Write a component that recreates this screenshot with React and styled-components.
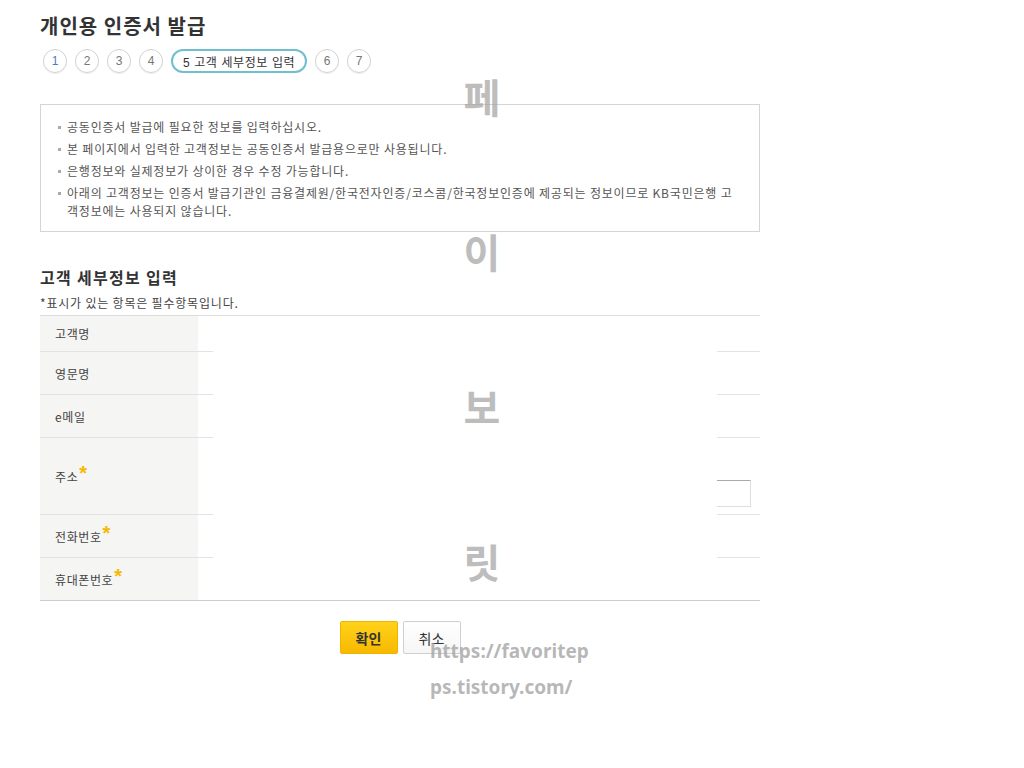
import React from "react";
import styled, { createGlobalStyle } from "styled-components";

const GlobalStyle = createGlobalStyle`
  html, body {
    margin: 0;
    padding: 0;
    background: #fff;
  }
  body {
    font-family: "Noto Sans CJK KR", "Noto Sans", sans-serif;
    color: #444;
  }
`;

const Page = styled.div`
  position: relative;
  width: 1024px;
  height: 768px;
  overflow: hidden;
`;

const Content = styled.div`
  width: 720px;
  padding: 10px 0 0 40px;
`;

const Title = styled.h2`
  margin: 0;
  font-size: 20px;
  line-height: 32px;
  font-weight: 700;
  letter-spacing: 1px;
  color: #333;
`;

const Steps = styled.ol`
  display: flex;
  gap: 8px;
  margin: 7px 0 0 3px;
  padding: 0;
  list-style: none;
`;

const Step = styled.li`
  box-sizing: border-box;
  height: 24px;
  min-width: 24px;
  padding: ${(p) => (p.$active ? "0 10px" : "0")};
  border-radius: 12px;
  border: ${(p) => (p.$active ? "2px solid #6fbfcf" : "1px solid #d2d2d2")};
  box-shadow: ${(p) => (p.$active ? "none" : "0 1px 1px rgba(0,0,0,0.08)")};
  display: flex;
  align-items: center;
  justify-content: center;
  font-family: "Liberation Sans", "Noto Sans CJK KR", sans-serif;
  font-size: 12px;
  color: ${(p) => (p.$active ? "#333" : p.$first ? "#4b7cc4" : "#777")};
  white-space: nowrap;
  letter-spacing: ${(p) => (p.$active ? "0.6px" : "0")};
`;

const InfoBox = styled.ul`
  box-sizing: border-box;
  width: 720px;
  margin: 31px 0 0;
  padding: 13px 22px 11px 17px;
  list-style: none;
  border: 1px solid #d4d4d4;
`;

const InfoItem = styled.li`
  position: relative;
  padding-left: 9px;
  font-size: 12px;
  line-height: 18px;
  letter-spacing: 0.8px;
  color: #555;
  & + & {
    margin-top: 4px;
  }
  &::before {
    content: "";
    position: absolute;
    left: 0;
    top: 8px;
    width: 3px;
    height: 3px;
    background: #b0a8a0;
  }
`;

const SectionTitle = styled.h3`
  margin: 33px 0 0;
  font-size: 16px;
  line-height: 24px;
  font-weight: 700;
  letter-spacing: 1.3px;
  color: #333;
`;

const Note = styled.p`
  margin: 6px 0 0;
  font-size: 12px;
  line-height: 16px;
  letter-spacing: 0.8px;
  color: #444;
`;

const Table = styled.div`
  margin-top: 4px;
  border-top: 1px solid #ddd;
  border-bottom: 1px solid #ccc;
`;

const Row = styled.div`
  display: flex;
  height: ${(p) => p.$h}px;
  & + & {
    border-top: 1px solid #e3e3e3;
  }
`;

const Label = styled.div`
  box-sizing: border-box;
  width: 158px;
  padding-left: 15px;
  display: flex;
  align-items: center;
  background: #f5f5f3;
  font-size: 12px;
  letter-spacing: 0.6px;
  color: #444;
`;

const Required = styled.span`
  color: #f5b800;
  font-size: 20px;
  font-weight: 700;
  line-height: 1;
  margin: -6px 0 0 1px;
  font-family: "Liberation Sans", sans-serif;
`;

const Cell = styled.div`
  flex: 1;
  display: flex;
  flex-direction: column;
  justify-content: flex-end;
  align-items: flex-end;
  padding: 0 9px 7px 0;
`;

const Input = styled.input`
  box-sizing: border-box;
  width: 300px;
  height: 27px;
  border: 1px solid #ddd;
  border-top-color: #aaa;
  background: #fff;
`;

const Buttons = styled.div`
  display: flex;
  justify-content: center;
  gap: 5px;
  margin-top: 20px;
`;

const Button = styled.button`
  box-sizing: border-box;
  width: 58px;
  height: 33px;
  border-radius: 2px;
  font-family: "Noto Sans CJK KR", sans-serif;
  font-size: 14px;
  font-weight: ${(p) => (p.$primary ? 700 : 400)};
  color: #333;
  border: 1px solid ${(p) => (p.$primary ? "#f0b400" : "#cfcfcf")};
  background: ${(p) =>
    p.$primary
      ? "linear-gradient(#ffd21a, #f7b900)"
      : "linear-gradient(#ffffff, #f6f6f6)"};
  cursor: pointer;
`;

const Mask = styled.div`
  position: absolute;
  left: 213px;
  top: 316px;
  width: 504px;
  height: 283px;
  background: #fff;
`;

const Watermark = styled.div`
  position: absolute;
  left: 440px;
  top: 74px;
  width: 84px;
  display: flex;
  flex-direction: column;
  align-items: center;
  gap: 111px;
  pointer-events: none;
`;

const WaterChar = styled.span`
  font-family: "Noto Sans CJK KR", sans-serif;
  font-size: 40px;
  line-height: 44px;
  font-weight: 700;
  color: rgba(160, 160, 160, 0.7);
`;

const WaterUrl = styled.div`
  position: absolute;
  left: 430px;
  top: 633px;
  font-family: "Noto Sans", "Liberation Sans", sans-serif;
  font-size: 19px;
  line-height: 36px;
  font-weight: 700;
  color: rgba(160, 160, 160, 0.75);
  pointer-events: none;
`;

const steps = ["1", "2", "3", "4", "5 고객 세부정보 입력", "6", "7"];

const infos = [
  "공동인증서 발급에 필요한 정보를 입력하십시오.",
  "본 페이지에서 입력한 고객정보는 공동인증서 발급용으로만 사용됩니다.",
  "은행정보와 실제정보가 상이한 경우 수정 가능합니다.",
  "아래의 고객정보는 인증서 발급기관인 금융결제원/한국전자인증/코스콤/한국정보인증에 제공되는 정보이므로 KB국민은행 고객정보에는 사용되지 않습니다.",
];

const rows = [
  { label: "고객명", h: 35 },
  { label: "영문명", h: 42 },
  { label: "e메일", h: 42 },
  { label: "주소", h: 76, req: true, input: true },
  { label: "전화번호", h: 42, req: true },
  { label: "휴대폰번호", h: 42, req: true },
];

export default function App() {
  return (
    <Page>
      <GlobalStyle />
      <Content>
        <Title>개인용 인증서 발급</Title>
        <Steps>
          {steps.map((s, i) => (
            <Step key={s} $active={i === 4} $first={i === 0}>
              {s}
            </Step>
          ))}
        </Steps>

        <InfoBox>
          {infos.map((t) => (
            <InfoItem key={t}>{t}</InfoItem>
          ))}
        </InfoBox>

        <SectionTitle>고객 세부정보 입력</SectionTitle>
        <Note>*표시가 있는 항목은 필수항목입니다.</Note>

        <Table>
          {rows.map((r) => (
            <Row key={r.label} $h={r.h}>
              <Label>
                {r.label}
                {r.req && <Required>*</Required>}
              </Label>
              <Cell>{r.input && <Input type="text" />}</Cell>
            </Row>
          ))}
        </Table>

        <Buttons>
          <Button $primary>확인</Button>
          <Button>취소</Button>
        </Buttons>
      </Content>

      <Mask />
      <Watermark>
        {["페", "이", "보", "릿"].map((c) => (
          <WaterChar key={c}>{c}</WaterChar>
        ))}
      </Watermark>
      <WaterUrl>
        https://favoritep
        <br />
        ps.tistory.com/
      </WaterUrl>
    </Page>
  );
}
